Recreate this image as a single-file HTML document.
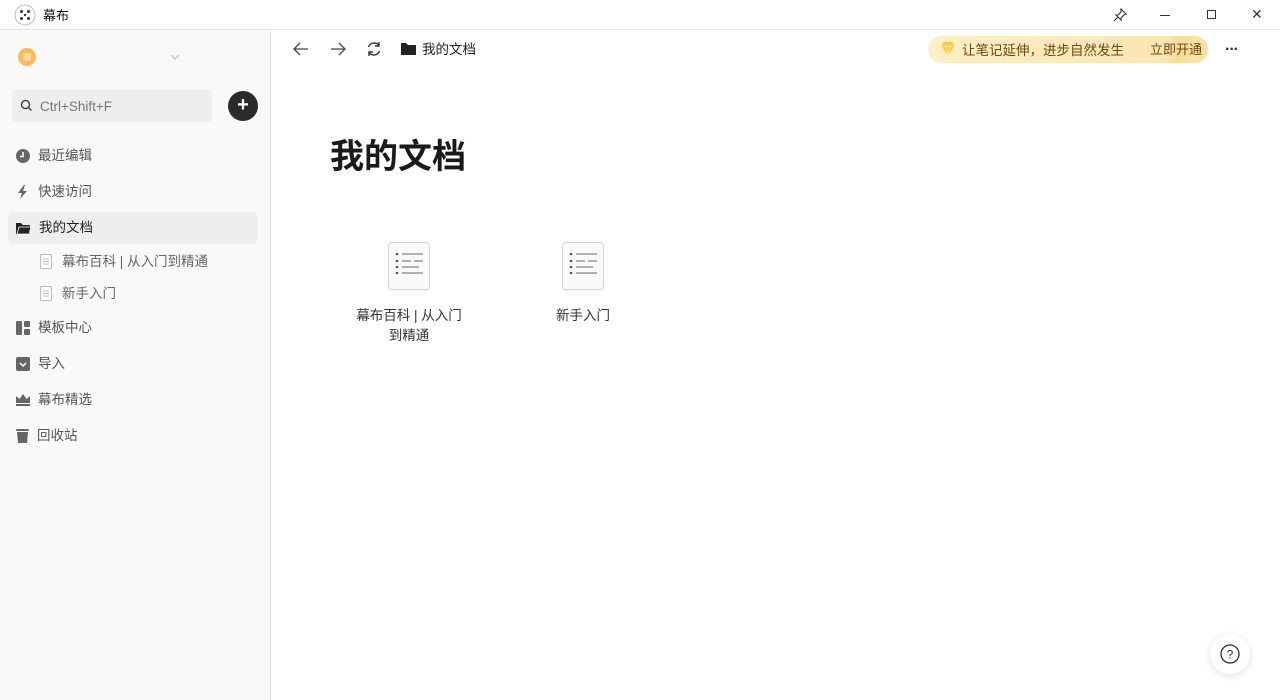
<!DOCTYPE html>
<html><head><meta charset="utf-8"><style>
*{margin:0;padding:0;box-sizing:border-box}
body{width:1280px;height:700px;overflow:hidden;background:#fff;font-family:"Liberation Sans","Noto Sans CJK SC",sans-serif;position:relative;color:#333}
.abs{position:absolute}
.title{top:0;left:0;width:1280px;height:30px;border-bottom:1px solid #e3e3e3;background:#fff}
.side{top:30px;left:0;width:271px;height:670px;background:#faf9f8;border-right:1px solid #e8e8e8}
.nav{position:absolute;left:8px;width:250px;height:32px;display:flex;align-items:center;font-size:13.5px;color:#555;line-height:14px}
.nav svg{margin-left:8px;margin-right:8px}
.sub{position:absolute;left:40px;font-size:13.5px;color:#666;display:flex;align-items:center;line-height:14px}
.doc{position:absolute;width:42px;height:48px;border:1px solid #d8d8d8;border-radius:4px;background:#fafafa;box-shadow:0 1px 2px rgba(0,0,0,.06)}
</style></head><body>
<div class="abs title">
 <svg class="abs" style="left:14px;top:4px" width="22" height="22" viewBox="0 0 22 22"><circle cx="11" cy="11" r="10" fill="#fff" stroke="#bbb"/><g fill="#333"><circle cx="7.5" cy="7.5" r="1.5"/><circle cx="14.5" cy="7.5" r="1.5"/><circle cx="7.5" cy="14.5" r="1.5"/><circle cx="14.5" cy="14.5" r="1.5"/><circle cx="11" cy="11" r="1.2"/></g></svg>
 <div class="abs" style="left:43px;top:5px;font-size:13px;color:#111">幕布</div>
 <svg class="abs" style="left:1113px;top:8px" width="14" height="14" viewBox="0 0 14 14" fill="none" stroke="#333" stroke-width="1.1"><path d="M8 1l5 5-2 1-3 3 0 2-5-5 2 0 3-3z M4.5 9.5L1 13"/></svg>
 <div class="abs" style="left:1160px;top:15px;width:10px;height:1px;background:#333"></div>
 <div class="abs" style="left:1207px;top:10px;width:9px;height:9px;border:1px solid #333"></div>
 <div class="abs" style="left:1251px;top:6px;font-size:14px;color:#333">✕</div>
</div>
<div class="abs side">
 <div class="abs" style="left:18px;top:18px;width:18px;height:18px;border-radius:50%;background:#fdb95a"><div style="margin:5px;width:8px;height:8px;background:#fed9a0;border-radius:2px"></div></div>
 <svg class="abs" style="left:170px;top:24px" width="10" height="6" viewBox="0 0 10 6"><path d="M1 1l4 4 4-4" stroke="#bbb" fill="none"/></svg>
 <div class="abs" style="left:12px;top:60px;width:200px;height:32px;background:#efeeec;border-radius:4px;font-size:13.5px;color:#777;padding:9px 0 0 28px">Ctrl+Shift+F</div>
 <svg class="abs" style="left:20px;top:69px" width="13" height="13" viewBox="0 0 13 13" fill="none" stroke="#444" stroke-width="1.4"><circle cx="5.5" cy="5.5" r="4"/><path d="M8.5 8.5l3 3"/></svg>
 <div class="abs" style="left:228px;top:61px;width:30px;height:30px;border-radius:50%;background:#2b2b2b;color:#fff;font-size:20px;line-height:29px;text-align:center;font-weight:bold">+</div>
 <div class="nav" style="top:110px"><svg width="14" height="14" viewBox="0 0 14 14"><circle cx="7" cy="7" r="7" fill="#666"/><path d="M7 3v4.5H4" stroke="#fff" stroke-width="1.5" fill="none"/></svg>最近编辑</div>
 <div class="nav" style="top:146px"><svg width="14" height="14" viewBox="0 0 14 14"><path d="M8 0L2 8h4l-2 6 7-8H7l2-6z" fill="#666"/></svg>快速访问</div>
 <div class="nav" style="top:182px;background:#efeeec;border-radius:6px;color:#222"><svg width="15" height="13" viewBox="0 0 15 13"><path d="M0 1h5l2 2h7v9H0z" fill="#222"/><path d="M3 5h12l-2 7H1z" fill="#222" stroke="#fff" stroke-width=".8"/></svg>我的文档</div>
 <div class="sub" style="top:224px"><svg width="12" height="15" viewBox="0 0 12 15" style="margin-right:10px"><rect x=".5" y=".5" width="11" height="14" rx="1" fill="#fff" stroke="#bbb"/><path d="M3 5h6M3 7.5h6M3 10h6" stroke="#bbb"/></svg>幕布百科 | 从入门到精通</div>
 <div class="sub" style="top:256px"><svg width="12" height="15" viewBox="0 0 12 15" style="margin-right:10px"><rect x=".5" y=".5" width="11" height="14" rx="1" fill="#fff" stroke="#bbb"/><path d="M3 5h6M3 7.5h6M3 10h6" stroke="#bbb"/></svg>新手入门</div>
 <div class="nav" style="top:282px"><svg width="14" height="14" viewBox="0 0 14 14" fill="#666"><rect width="6" height="14" rx="1"/><rect x="8" width="6" height="6" rx="1"/><rect x="8" y="8" width="6" height="6" rx="1"/></svg>模板中心</div>
 <div class="nav" style="top:318px"><svg width="14" height="14" viewBox="0 0 14 14"><rect width="14" height="14" rx="2" fill="#666"/><path d="M4 6l3 3 3-3" stroke="#fff" stroke-width="1.5" fill="none"/></svg>导入</div>
 <div class="nav" style="top:354px"><svg width="14" height="12" viewBox="0 0 14 12" fill="#666"><path d="M0 2l3.5 3L7 0l3.5 5L14 2v7H0z"/><rect y="10" width="14" height="2"/></svg>幕布精选</div>
 <div class="nav" style="top:390px"><svg width="13" height="14" viewBox="0 0 13 14" fill="#666"><rect width="13" height="2" rx="1"/><rect x="4.5" y="-1" width="4" height="2"/><path d="M1 3h11l-1 11H2z"/></svg>回收站</div>
</div>
<svg class="abs" style="left:293px;top:42px" width="16" height="14" viewBox="0 0 16 14" fill="none" stroke="#444" stroke-width="1.3"><path d="M15 7H2M7 1L1 7l6 6"/></svg>
<svg class="abs" style="left:330px;top:42px" width="16" height="14" viewBox="0 0 16 14" fill="none" stroke="#444" stroke-width="1.3"><path d="M1 7h13M9 1l6 6-6 6"/></svg>
<svg class="abs" style="left:366px;top:41px" width="16" height="16" viewBox="0 0 16 16" fill="none" stroke="#333" stroke-width="1.4"><path d="M2.5 6A6 6 0 0 1 13 4.5M13.5 10A6 6 0 0 1 3 11.5"/><path d="M13 1v4h-4M3 15v-4h4" /></svg>
<svg class="abs" style="left:401px;top:42px" width="15" height="13" viewBox="0 0 15 13" fill="#222"><path d="M0 1h5l2 2h8v10H0z"/></svg>
<div class="abs" style="left:422px;top:38px;font-size:13.5px;color:#222">我的文档</div>
<div class="abs" style="left:928px;top:36px;width:280px;height:27px;border-radius:14px;background:linear-gradient(100deg,#fdeec4 0,#fbe6b3 85%,#f8db95 89%,#fbe3a8 95%,#f9dd9a 100%)"></div>
<svg class="abs" style="left:941px;top:42px" width="14" height="13" viewBox="0 0 14 13"><path d="M3 0h8l3 4-7 9-7-9z" fill="#f7c84a"/><path d="M0 4h14M5 4l2 9 2-9" stroke="#fbe6a0" fill="none"/></svg>
<div class="abs" style="left:962px;top:39px;font-size:13.5px;color:#6a4a10">让笔记延伸，进步自然发生</div>
<div class="abs" style="left:1150px;top:39px;font-size:13px;color:#6a4a10">立即开通</div>
<div class="abs" style="left:1225px;top:41px;font-size:16px;color:#333;letter-spacing:-1px;font-weight:bold">···</div>
<div class="abs" style="left:330px;top:129px;font-size:34px;font-weight:bold;color:#1a1a1a">我的文档</div>
<div class="doc" style="left:388px;top:242px"></div>
<div class="doc" style="left:562px;top:242px"></div>
<svg class="abs" style="left:394px;top:250px" width="32" height="30" viewBox="0 0 32 30" stroke="#666" fill="#555"><circle cx="3" cy="4" r="1.3" stroke="none"/><circle cx="3" cy="11" r="1.3" stroke="none"/><circle cx="3" cy="17" r="1.3" stroke="none"/><circle cx="3" cy="23" r="1.3" stroke="none"/><path d="M8 4h21M8 11h9M20 11h9M8 17h17M8 23h21" fill="none"/></svg>
<svg class="abs" style="left:568px;top:250px" width="32" height="30" viewBox="0 0 32 30" stroke="#666" fill="#555"><circle cx="3" cy="4" r="1.3" stroke="none"/><circle cx="3" cy="11" r="1.3" stroke="none"/><circle cx="3" cy="17" r="1.3" stroke="none"/><circle cx="3" cy="23" r="1.3" stroke="none"/><path d="M8 4h21M8 11h9M20 11h9M8 17h17M8 23h21" fill="none"/></svg>
<div class="abs" style="left:339px;top:306px;width:140px;text-align:center;font-size:13.5px;line-height:20px;color:#333">幕布百科 | 从入门<br>到精通</div>
<div class="abs" style="left:513px;top:306px;width:140px;text-align:center;font-size:13.5px;line-height:20px;color:#333">新手入门</div>
<div class="abs" style="left:1210px;top:634px;width:40px;height:40px;border-radius:50%;background:#fff;box-shadow:0 2px 8px rgba(0,0,0,.12)"></div>
<svg class="abs" style="left:1220px;top:644px" width="20" height="20" viewBox="0 0 20 20"><circle cx="10" cy="10" r="9" fill="none" stroke="#333" stroke-width="1.3"/><text x="10" y="14.5" font-size="12" text-anchor="middle" fill="#333" font-family="Liberation Sans">?</text></svg>
</body></html>
